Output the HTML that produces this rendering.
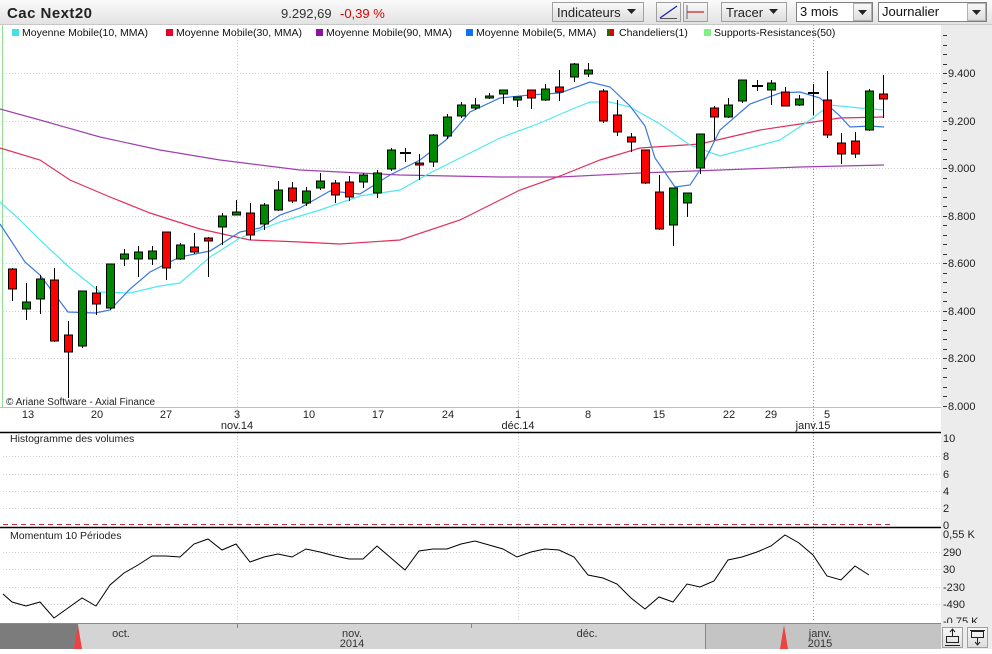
<!DOCTYPE html>
<html><head><meta charset="utf-8"><style>
body{margin:0;width:992px;height:649px;overflow:hidden;background:#fff;font-family:"Liberation Sans",sans-serif;}
svg text{font-family:"Liberation Sans",sans-serif;}
</style></head><body>
<svg width="992" height="649" viewBox="0 0 992 649" xmlns="http://www.w3.org/2000/svg">
<defs>
<linearGradient id="hg" x1="0" y1="0" x2="0" y2="1"><stop offset="0" stop-color="#fbfbfb"/><stop offset="1" stop-color="#e2e2e2"/></linearGradient>
<linearGradient id="bg" x1="0" y1="0" x2="0" y2="1"><stop offset="0" stop-color="#fafafa"/><stop offset="1" stop-color="#dcdcdc"/></linearGradient>
</defs>
<rect x="0" y="0" width="992" height="25" fill="url(#hg)"/>
<line x1="0" y1="24.5" x2="992" y2="24.5" stroke="#c8c8c8"/>
<text x="7" y="18" font-size="15" font-weight="bold" fill="#222" textLength="85">Cac Next20</text>
<text x="281" y="18" font-size="13" fill="#333">9.292,69</text>
<text x="340" y="18" font-size="13" fill="#e00000">-0,39 %</text>
<rect x="552.5" y="2.5" width="91" height="19" fill="url(#bg)" stroke="#a0a0a0"/>
<text x="557" y="17" font-size="13" fill="#222">Indicateurs</text>
<path d="M627 9h9l-4.5 5z" fill="#222"/>
<rect x="656.5" y="2.5" width="24" height="19" fill="url(#bg)" stroke="#a0a0a0"/>
<line x1="660" y1="18" x2="677" y2="6" stroke="#2020c0" stroke-width="1.3"/>
<line x1="660" y1="18.5" x2="677" y2="18.5" stroke="#555"/>
<rect x="683.5" y="2.5" width="24" height="19" fill="url(#bg)" stroke="#a0a0a0"/>
<line x1="687" y1="12" x2="704" y2="12" stroke="#d02020" stroke-width="1.3"/>
<line x1="687" y1="5" x2="687" y2="19" stroke="#666"/>
<rect x="721.5" y="2.5" width="65" height="19" fill="url(#bg)" stroke="#a0a0a0"/>
<text x="726" y="17" font-size="13" fill="#222">Tracer</text>
<path d="M769 9h9l-4.5 5z" fill="#222"/>
<rect x="796.5" y="2.5" width="76" height="19" fill="#fff" stroke="#808080"/>
<text x="800" y="16" font-size="13" fill="#111">3 mois</text>
<rect x="853.5" y="3.5" width="18" height="17" fill="url(#bg)" stroke="#b0b0b0"/>
<path d="M858 10h9l-4.5 5z" fill="#222"/>
<rect x="878.5" y="2.5" width="108" height="19" fill="#fff" stroke="#808080"/>
<text x="882" y="16" font-size="13" fill="#111">Journalier</text>
<rect x="967.5" y="3.5" width="18" height="17" fill="url(#bg)" stroke="#b0b0b0"/>
<path d="M972 10h9l-4.5 5z" fill="#222"/>

<rect x="941" y="25" width="51" height="599" fill="#ececec"/>
<line x1="2.5" y1="25" x2="2.5" y2="407" stroke="#90e090"/>

<g font-size="10.5" fill="#111">
<rect x="12" y="29" width="7" height="7" fill="#40e0e8"/><text x="22" y="36">Moyenne Mobile(10, MMA)</text>
<rect x="166" y="29" width="7" height="7" fill="#e8002c"/><text x="176" y="36">Moyenne Mobile(30, MMA)</text>
<rect x="316" y="29" width="7" height="7" fill="#9010a0"/><text x="326" y="36">Moyenne Mobile(90, MMA)</text>
<rect x="466" y="29" width="7" height="7" fill="#1070f0"/><text x="476" y="36">Moyenne Mobile(5, MMA)</text>
<rect x="607" y="29" width="7" height="7" fill="#008000"/><rect x="610" y="29" width="4" height="7" fill="#e00000"/><text x="619" y="36">Chandeliers(1)</text>
<rect x="704" y="29" width="7" height="7" fill="#80f080"/><text x="714" y="36">Supports-Resistances(50)</text>
</g>

<g stroke="#d0d0d0" stroke-dasharray="1,2">
<line x1="3" y1="73.5" x2="941" y2="73.5"/><line x1="3" y1="121.5" x2="941" y2="121.5"/>
<line x1="3" y1="168.5" x2="941" y2="168.5"/><line x1="3" y1="216.5" x2="941" y2="216.5"/>
<line x1="3" y1="263.5" x2="941" y2="263.5"/><line x1="3" y1="311.5" x2="941" y2="311.5"/>
<line x1="3" y1="358.5" x2="941" y2="358.5"/>
<line x1="237.5" y1="25" x2="237.5" y2="622"/><line x1="518.5" y1="25" x2="518.5" y2="622"/><line x1="813.5" y1="25" x2="813.5" y2="622" stroke="#909090"/>
<line x1="3" y1="456.5" x2="941" y2="456.5"/><line x1="3" y1="474.5" x2="941" y2="474.5"/><line x1="3" y1="491.5" x2="941" y2="491.5"/><line x1="3" y1="508.5" x2="941" y2="508.5"/>
<line x1="3" y1="552.5" x2="941" y2="552.5"/><line x1="3" y1="569.5" x2="941" y2="569.5"/><line x1="3" y1="587.5" x2="941" y2="587.5"/><line x1="3" y1="604.5" x2="941" y2="604.5"/>
</g>
<line x1="0" y1="407.5" x2="941" y2="407.5" stroke="#c0c0c0"/>

<g fill="none" stroke-width="1.2">
<polyline stroke="#a040b0" points="0,109 40,120 100,137 160,150 220,160 300,170 400,175 500,177 560,177 640,173 720,170 800,167 884,165"/>
<polyline stroke="#e0305a" points="0,148 40,160 70,180 110,197 150,213 200,229 250,240 300,242 340,244 400,240 460,220 520,190 560,176 600,160 640,148 700,144 760,130 800,124 840,118 884,117"/>
<polyline stroke="#50e8f0" points="0,202 20,220 40,240 70,268 100,292 130,293 160,286 180,283 210,257 240,238 280,222 320,210 360,196 400,190 430,173 460,158 500,138 540,123 570,110 590,102 610,102 630,107 660,124 690,145 720,156 750,148 780,140 810,120 830,105 860,108 884,110"/>
<polyline stroke="#3a78e0" points="0,224 25,262 40,275 68,312 95,313 110,310 130,289 150,272 180,257 210,251 240,232 260,228 280,215 300,208 330,191 360,194 390,175 420,160 446,140 470,112 500,98 530,95 560,93 590,82 610,87 630,106 645,126 655,158 675,187 690,185 700,170 720,130 750,104 780,93 800,92 820,98 840,116 850,127 870,126 884,127"/>
</g>

<g stroke="#000" stroke-width="1">
<line x1="12.5" y1="268" x2="12.5" y2="301"/><rect x="8.5" y="269" width="8" height="20" fill="#f00"/>
<line x1="26.5" y1="283" x2="26.5" y2="320"/><rect x="22.5" y="302" width="8" height="7" fill="#080"/>
<line x1="40.5" y1="275" x2="40.5" y2="314"/><rect x="36.5" y="279" width="8" height="20" fill="#080"/>
<line x1="54.5" y1="268" x2="54.5" y2="342"/><rect x="50.5" y="280" width="8" height="61" fill="#f00"/>
<line x1="68.5" y1="321" x2="68.5" y2="398"/><rect x="64.5" y="335" width="8" height="17" fill="#f00"/>
<line x1="82.5" y1="291" x2="82.5" y2="348"/><rect x="78.5" y="291" width="8" height="55" fill="#080"/>
<line x1="96.5" y1="286" x2="96.5" y2="315"/><rect x="92.5" y="293" width="8" height="11" fill="#f00"/>
<line x1="110.5" y1="264" x2="110.5" y2="310"/><rect x="106.5" y="264" width="8" height="44" fill="#080"/>
<line x1="124.5" y1="249" x2="124.5" y2="266"/><rect x="120.5" y="254" width="8" height="5" fill="#080"/>
<line x1="138.5" y1="246" x2="138.5" y2="277"/><rect x="134.5" y="252" width="8" height="7" fill="#080"/>
<line x1="152.5" y1="246" x2="152.5" y2="265"/><rect x="148.5" y="251" width="8" height="8" fill="#080"/>
<line x1="166.5" y1="232" x2="166.5" y2="280"/><rect x="162.5" y="232" width="8" height="36" fill="#f00"/>
<line x1="180.5" y1="243" x2="180.5" y2="260"/><rect x="176.5" y="245" width="8" height="14" fill="#080"/>
<line x1="194.5" y1="233" x2="194.5" y2="254"/><rect x="190.5" y="247" width="8" height="5" fill="#f00"/>
<line x1="208.5" y1="237" x2="208.5" y2="277"/><rect x="204.5" y="238" width="8" height="3" fill="#f00"/>
<line x1="222.5" y1="213" x2="222.5" y2="245"/><rect x="218.5" y="216" width="8" height="11" fill="#080"/>
<line x1="236.5" y1="200" x2="236.5" y2="215"/><rect x="232.5" y="212" width="8" height="3" fill="#080"/>
<line x1="250.5" y1="203" x2="250.5" y2="240"/><rect x="246.5" y="213" width="8" height="22" fill="#f00"/>
<line x1="264.5" y1="203" x2="264.5" y2="230"/><rect x="260.5" y="205" width="8" height="19" fill="#080"/>
<line x1="278.5" y1="181" x2="278.5" y2="211"/><rect x="274.5" y="190" width="8" height="20" fill="#080"/>
<line x1="292.5" y1="182" x2="292.5" y2="203"/><rect x="288.5" y="188" width="8" height="13" fill="#f00"/>
<line x1="306.5" y1="187" x2="306.5" y2="206"/><rect x="302.5" y="191" width="8" height="12" fill="#080"/>
<line x1="320.5" y1="173" x2="320.5" y2="190"/><rect x="316.5" y="181" width="8" height="7" fill="#080"/>
<line x1="335.5" y1="180" x2="335.5" y2="203"/><rect x="331.5" y="183" width="8" height="12" fill="#f00"/>
<line x1="349.5" y1="176" x2="349.5" y2="201"/><rect x="345.5" y="182" width="8" height="15" fill="#f00"/>
<line x1="363.5" y1="173" x2="363.5" y2="188"/><rect x="359.5" y="175" width="8" height="7" fill="#080"/>
<line x1="377.5" y1="170" x2="377.5" y2="198"/><rect x="373.5" y="173" width="8" height="20" fill="#080"/>
<line x1="391.5" y1="148" x2="391.5" y2="171"/><rect x="387.5" y="150" width="8" height="19" fill="#080"/>
<line x1="405.5" y1="148" x2="405.5" y2="162"/><line x1="400" y1="153" x2="411" y2="153" stroke-width="2"/>
<line x1="419.5" y1="154" x2="419.5" y2="180"/><rect x="415.5" y="163" width="8" height="2" fill="#f00"/>
<line x1="433.5" y1="134" x2="433.5" y2="167"/><rect x="429.5" y="135" width="8" height="27" fill="#080"/>
<line x1="447.5" y1="114" x2="447.5" y2="139"/><rect x="443.5" y="117" width="8" height="19" fill="#080"/>
<line x1="461.5" y1="102" x2="461.5" y2="118"/><rect x="457.5" y="105" width="8" height="11" fill="#080"/>
<line x1="475.5" y1="98" x2="475.5" y2="110"/><rect x="471.5" y="105" width="8" height="3" fill="#080"/>
<line x1="489.5" y1="93" x2="489.5" y2="99"/><rect x="485.5" y="96" width="8" height="2" fill="#080"/>
<line x1="503.5" y1="90" x2="503.5" y2="104"/><rect x="499.5" y="90" width="8" height="4" fill="#080"/>
<line x1="517.5" y1="97" x2="517.5" y2="107"/><rect x="513.5" y="97" width="8" height="3" fill="#080"/>
<line x1="531.5" y1="90" x2="531.5" y2="109"/><rect x="527.5" y="90" width="8" height="8" fill="#f00"/>
<line x1="545.5" y1="84" x2="545.5" y2="101"/><rect x="541.5" y="89" width="8" height="11" fill="#080"/>
<line x1="559.5" y1="70" x2="559.5" y2="101"/><rect x="555.5" y="87" width="8" height="5" fill="#f00"/>
<line x1="574.5" y1="63" x2="574.5" y2="82"/><rect x="570.5" y="64" width="8" height="13" fill="#080"/>
<line x1="588.5" y1="63" x2="588.5" y2="77"/><rect x="584.5" y="70" width="8" height="4" fill="#080"/>
<line x1="603.5" y1="89" x2="603.5" y2="123"/><rect x="599.5" y="91" width="8" height="30" fill="#f00"/>
<line x1="617.5" y1="100" x2="617.5" y2="136"/><rect x="613.5" y="115" width="8" height="17" fill="#f00"/>
<line x1="631.5" y1="133" x2="631.5" y2="152"/><rect x="627.5" y="137" width="8" height="5" fill="#f00"/>
<line x1="645.5" y1="150" x2="645.5" y2="184"/><rect x="641.5" y="150" width="8" height="33" fill="#f00"/>
<line x1="659.5" y1="175" x2="659.5" y2="230"/><rect x="655.5" y="192" width="8" height="37" fill="#f00"/>
<line x1="673.5" y1="188" x2="673.5" y2="246"/><rect x="669.5" y="188" width="8" height="37" fill="#080"/>
<line x1="687.5" y1="193" x2="687.5" y2="217"/><rect x="683.5" y="193" width="8" height="10" fill="#080"/>
<line x1="700.5" y1="134" x2="700.5" y2="174"/><rect x="696.5" y="134" width="8" height="34" fill="#080"/>
<line x1="714.5" y1="106" x2="714.5" y2="140"/><rect x="710.5" y="108" width="8" height="9" fill="#f00"/>
<line x1="728.5" y1="98" x2="728.5" y2="118"/><rect x="724.5" y="105" width="8" height="12" fill="#080"/>
<line x1="742.5" y1="80" x2="742.5" y2="103"/><rect x="738.5" y="80" width="8" height="21" fill="#080"/>
<line x1="757.5" y1="80" x2="757.5" y2="91"/><line x1="752" y1="86" x2="763" y2="86" stroke-width="2"/>
<line x1="771.5" y1="80" x2="771.5" y2="105"/><rect x="767.5" y="83" width="8" height="7" fill="#080"/>
<line x1="785.5" y1="87" x2="785.5" y2="106"/><rect x="781.5" y="92" width="8" height="14" fill="#f00"/>
<line x1="799.5" y1="95" x2="799.5" y2="106"/><rect x="795.5" y="99" width="8" height="6" fill="#080"/>
<line x1="813.5" y1="84" x2="813.5" y2="115"/><line x1="808" y1="93" x2="819" y2="93" stroke-width="2"/>
<line x1="827.5" y1="71" x2="827.5" y2="138"/><rect x="823.5" y="100" width="8" height="35" fill="#f00"/>
<line x1="841.5" y1="133" x2="841.5" y2="164"/><rect x="837.5" y="143" width="8" height="11" fill="#f00"/>
<line x1="855.5" y1="132" x2="855.5" y2="158"/><rect x="851.5" y="141" width="8" height="13" fill="#f00"/>
<line x1="869.5" y1="89" x2="869.5" y2="131"/><rect x="865.5" y="91" width="8" height="39" fill="#080"/>
<line x1="883.5" y1="75" x2="883.5" y2="118"/><rect x="879.5" y="94" width="8" height="5" fill="#f00"/>
</g>

<text x="6" y="405" font-size="10" fill="#222">© Ariane Software - Axial Finance</text>

<g stroke="#333">
<path d="M943 35.5h4M943 45.5h4M943 54.5h4M943 64.5h4M943 73.5h4M943 83.5h4M943 92.5h4M943 102.5h4M943 111.5h4M943 121.5h4M943 130.5h4M943 140.5h4M943 149.5h4M943 159.5h4M943 168.5h4M943 178.5h4M943 187.5h4M943 197.5h4M943 206.5h4M943 216.5h4M943 225.5h4M943 235.5h4M943 244.5h4M943 254.5h4M943 263.5h4M943 273.5h4M943 282.5h4M943 292.5h4M943 301.5h4M943 311.5h4M943 320.5h4M943 330.5h4M943 339.5h4M943 349.5h4M943 358.5h4M943 368.5h4M943 377.5h4M943 387.5h4M943 396.5h4M943 406.5h4"/>
</g>
<g font-size="11" fill="#222">
<text x="948" y="77">9.400</text><text x="948" y="125">9.200</text><text x="948" y="172">9.000</text>
<text x="948" y="220">8.800</text><text x="948" y="267">8.600</text><text x="948" y="315">8.400</text>
<text x="948" y="362">8.200</text><text x="948" y="410">8.000</text>
</g>

<g font-size="11" fill="#222" text-anchor="middle">
<text x="28" y="418">13</text><text x="97" y="418">20</text><text x="166" y="418">27</text><text x="237" y="418">3</text>
<text x="309" y="418">10</text><text x="378" y="418">17</text><text x="448" y="418">24</text><text x="518" y="418">1</text>
<text x="588" y="418">8</text><text x="659" y="418">15</text><text x="729" y="418">22</text><text x="771" y="418">29</text><text x="827" y="418">5</text>
<text x="237" y="429">nov.14</text><text x="518" y="429">déc.14</text><text x="813" y="429">janv.15</text>
</g>

<line x1="0" y1="432.5" x2="941" y2="432.5" stroke="#000" stroke-width="1.5"/>
<text x="10" y="442" font-size="10.5" fill="#222">Histogramme des volumes</text>
<line x1="3" y1="524.5" x2="890" y2="524.5" stroke="#c03040" stroke-dasharray="5,4"/>
<line x1="0" y1="527.5" x2="941" y2="527.5" stroke="#000" stroke-width="1.5"/>
<g font-size="11" fill="#222">
<text x="943" y="442">10</text><text x="943" y="460">8</text><text x="943" y="478">6</text><text x="943" y="495">4</text><text x="943" y="512">2</text><text x="943" y="529">0</text>
<text x="943" y="538">0,55 K</text><text x="943" y="556">290</text><text x="943" y="573">30</text><text x="943" y="591">-230</text><text x="943" y="608">-490</text><text x="943" y="625">-0,75 K</text>
</g>

<text x="10" y="539" font-size="10.5" fill="#222">Momentum 10 Périodes</text>
<polyline fill="none" stroke="#000" stroke-width="1" points="3,594 12,602 26,606 40,602 54,618 68,608 82,598 96,606 110,585 124,573 138,565 152,556 166,556 180,557 194,544 208,539 222,550 236,544 250,562 264,557 278,554 292,557 306,549 320,552 335,556 349,559 363,559 377,546 391,558 405,570 419,551 433,549 447,549 461,544 475,541 489,545 503,549 517,557 531,552 545,549 559,550 574,557 588,575 603,578 617,584 631,598 645,609 659,597 673,602 687,584 700,587 714,581 728,560 742,557 757,552 771,546 785,535 799,543 813,555 827,576 841,580 855,566 869,575"/>

<rect x="0" y="623" width="941" height="26" fill="#d4d4d4"/>
<line x1="0" y1="623.5" x2="941" y2="623.5" stroke="#888"/>
<rect x="0" y="624" width="78" height="25" fill="#7c7c7c"/>
<rect x="706" y="624" width="235" height="25" fill="#c4c4c4"/>
<line x1="705.5" y1="624" x2="705.5" y2="649" stroke="#888"/>
<path d="M74 649l4-24 4 24z" fill="#f04040"/>
<path d="M780 649l4-24 4 24z" fill="#f04040"/>
<line x1="237.5" y1="624" x2="237.5" y2="628" stroke="#888"/>
<line x1="471.5" y1="624" x2="471.5" y2="628" stroke="#888"/>
<g font-size="11" fill="#333" text-anchor="middle">
<text x="121" y="637">oct.</text><text x="352" y="637">nov.</text><text x="352" y="647">2014</text>
<text x="587" y="637">déc.</text><text x="820" y="637">janv.</text><text x="820" y="647">2015</text>
</g>
<rect x="941" y="623" width="51" height="26" fill="#ececec"/>
<rect x="942.5" y="627.5" width="20" height="20" fill="url(#bg)" stroke="#a0a0a0"/>
<rect x="967.5" y="627.5" width="20" height="20" fill="url(#bg)" stroke="#a0a0a0"/>
<g stroke="#222" fill="none">
<rect x="946.5" y="636.5" width="12" height="6"/><line x1="952.5" y1="629" x2="952.5" y2="636"/><path d="M950 632l2.5-3 2.5 3"/><line x1="945" y1="645.5" x2="960" y2="645.5"/>
<line x1="970" y1="630.5" x2="985" y2="630.5"/><rect x="971.5" y="631.5" width="12" height="6"/><line x1="977.5" y1="637" x2="977.5" y2="645"/><path d="M975 642l2.5 3 2.5-3"/>
</g>
</svg>
</body></html>
